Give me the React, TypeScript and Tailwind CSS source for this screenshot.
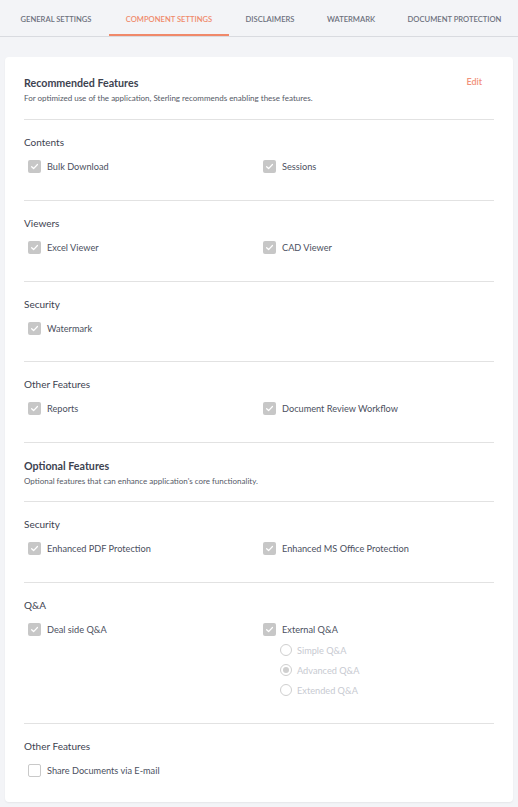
import React from "react";

const tabs: [string, string][] = [
  ["GENERAL SETTINGS", "w-[106px]"],
  ["COMPONENT SETTINGS", "w-[120px]"],
  ["DISCLAIMERS", "w-[82px]"],
  ["WATERMARK", "w-[80px]"],
  ["DOCUMENT PROTECTION", "w-[127px]"],
];

function Check({ checked = true }: { checked?: boolean }) {
  if (!checked) {
    return <span className="w-[13px] h-[13px] rounded-[2px] border-[1.5px] border-[#c9c9c9] bg-white shrink-0" />;
  }
  return (
    <span className="w-[13px] h-[13px] rounded-[2px] bg-[#c7c7c7] shrink-0 flex items-center justify-center">
      <svg width="9" height="9" viewBox="0 0 10 10" fill="none">
        <path d="M1.8 5.2 L4 7.3 L8.3 2.8" stroke="#ffffff" strokeWidth="1.4" strokeLinecap="round" strokeLinejoin="round" />
      </svg>
    </span>
  );
}

function Item({ label, checked = true }: { label: string; checked?: boolean }) {
  return (
    <div className="flex items-center gap-[6px] ml-[4px] h-[13px]">
      <Check checked={checked} />
      <span className="text-[9.2px] leading-[13px] text-[#4b5060] whitespace-nowrap">{label}</span>
    </div>
  );
}

function Radio({ label, selected = false }: { label: string; selected?: boolean }) {
  return (
    <div className="flex items-center gap-[5px] h-[20px] ml-[21px]">
      <span className="w-[12px] h-[12px] rounded-full border border-[#cfcfcf] bg-white flex items-center justify-center">
        {selected && <span className="w-[6px] h-[6px] rounded-full bg-[#cfcfcf]" />}
      </span>
      <span className="text-[9.2px] leading-[13px] text-[#c7cad1]">{label}</span>
    </div>
  );
}

function Divider() {
  return <div className="h-px bg-[#e2e2e2]" />;
}

function Section({ title, children, after = "h-[27px]" }: { title: string; children: React.ReactNode; after?: string }) {
  return (
    <div>
      <div className="pt-[16px] text-[10px] leading-[12px] text-[#3d4250]">{title}</div>
      <div className="mt-[12px]">{children}</div>
      <div className={after} />
    </div>
  );
}

function Header({ title, sub, edit = false, pb = "pb-[16px]" }: { title: string; sub: string; edit?: boolean; pb?: string }) {
  return (
    <div className={"pt-[16px] " + pb}>
      <div className="flex justify-between items-center">
        <div className="text-[10.7px] leading-[14px] font-bold text-[#3d4250]">{title}</div>
        {edit && <div className="text-[9px] font-semibold text-[#f2917a] pr-[12px] -mt-[2px]">Edit</div>}
      </div>
      <div className="mt-[3px] text-[8px] leading-[10px] text-[#555a66]">{sub}</div>
    </div>
  );
}

export default function App() {
  return (
    <div className="min-h-[807px] bg-[#f3f4f7] pb-[5px]" style={{ fontFamily: "Lato, 'Noto Sans', sans-serif" }}>
      <nav className="flex border-b border-[#d9dbe0] pl-[3px]">
        {tabs.map(([t, w], i) => (
          <div
            key={t}
            className={
              i === 1
                ? w + " shrink-0 h-[36px] flex items-center justify-center whitespace-nowrap text-[7.6px] font-semibold text-[#f0896a] border-b-2 border-[#f0896a] pt-[6px]"
                : w + " shrink-0 h-[36px] flex items-center justify-center whitespace-nowrap text-[7.6px] font-semibold text-[#6d717d] pt-[4px]"
            }
          >
            {t}
          </div>
        ))}
      </nav>
      <div className="mx-[5px] mt-[20px] bg-white rounded-[4px] shadow-[0_1px_2px_rgba(0,0,0,0.06)] px-[19px] pt-[3px] pb-[25px]">
        <Header
          title="Recommended Features"
          sub="For optimized use of the application, Sterling recommends enabling these features."
          edit
        />
        <Divider />
        <Section title="Contents">
          <div className="grid grid-cols-2">
            <Item label="Bulk Download" />
            <Item label="Sessions" />
          </div>
        </Section>
        <Divider />
        <Section title="Viewers">
          <div className="grid grid-cols-2">
            <Item label="Excel Viewer" />
            <Item label="CAD Viewer" />
          </div>
        </Section>
        <Divider />
        <Section title="Security" after="h-[26px]">
          <div className="grid grid-cols-2">
            <Item label="Watermark" />
          </div>
        </Section>
        <Divider />
        <Section title="Other Features">
          <div className="grid grid-cols-2">
            <Item label="Reports" />
            <Item label="Document Review Workflow" />
          </div>
        </Section>
        <Divider />
        <Header title="Optional Features" sub="Optional features that can enhance application's core functionality." pb="pb-[15px]" />
        <Divider />
        <Section title="Security">
          <div className="grid grid-cols-2">
            <Item label="Enhanced PDF Protection" />
            <Item label="Enhanced MS Office Protection" />
          </div>
        </Section>
        <Divider />
        <div>
          <div className="pt-[16px] text-[10px] leading-[12px] text-[#3d4250]">Q&amp;A</div>
          <div className="mt-[12px] grid grid-cols-2">
            <Item label="Deal side Q&A" />
            <div>
              <Item label="External Q&A" />
              <div className="mt-[4px]">
                <Radio label="Simple Q&A" />
                <Radio label="Advanced Q&A" selected />
                <Radio label="Extended Q&A" />
              </div>
            </div>
          </div>
          <div className="h-[23px]" />
        </div>
        <Divider />
        <Section title="Other Features" after="h-0">
          <Item label="Share Documents via E-mail" checked={false} />
        </Section>
      </div>
    </div>
  );
}
